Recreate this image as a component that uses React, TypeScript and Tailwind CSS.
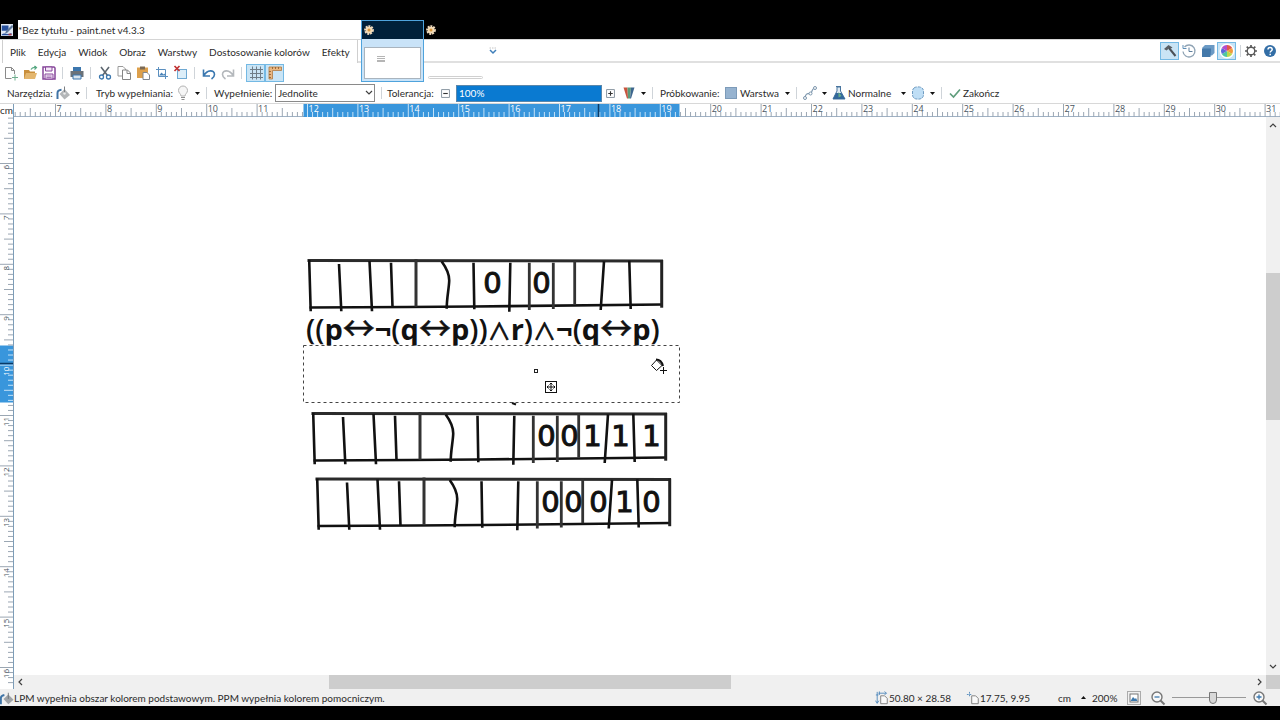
import type { ReactNode } from 'react';

const CM = 50.4;

function Icon({ children, size = 16 }: { children: ReactNode; size?: number }) {
  return (
    <svg width={size} height={size} viewBox="0 0 16 16" fill="none" className="shrink-0" aria-hidden="true">
      {children}
    </svg>
  );
}

const NewIcon = () => (
  <Icon>
    <path d="M8.500 13.500H2.500V2.500h6l3 3V9" stroke="#8a8a8a" />
    <path d="M8.500 2.500v3h3" stroke="#8a8a8a" />
    <path d="M12 9.500v6M9 12.500h6" stroke="#6fae8e" />
  </Icon>
);

const OpenIcon = () => (
  <Icon>
    <path d="M2 5h5l1 1.500h5V14H2z" fill="#c98f3c" />
    <path d="M4 8h11l-2 6H2z" fill="#e3b66e" />
    <path d="M9 4.500c1-2 3-2.500 5-2M12.500 1l2 1.500-2 2" stroke="#58a883" strokeWidth="1.200" />
  </Icon>
);

const SaveIcon = () => (
  <Icon>
    <path d="M2 2h11l1 1v11H2z" fill="#fff" stroke="#87479b" strokeWidth="1.500" />
    <path d="M4.500 2h6.500v4H4.500zM4 9h8v5H4z" fill="#f4e8f7" stroke="#87479b" />
    <path d="M5.500 11h5M5.500 12.500h5" stroke="#87479b" strokeWidth=".7" />
  </Icon>
);

const PrintIcon = () => (
  <Icon>
    <path d="M4 2h8v4H4z" fill="#3c77ae" />
    <path d="M1.500 6h13v6h-13z" fill="#6b7279" />
    <path d="M4 10h8v4H4z" fill="#d8e4ee" stroke="#3c77ae" />
  </Icon>
);

const CutIcon = () => (
  <Icon>
    <path d="M4 2l6.500 8.500M12 2L5.500 10.500" stroke="#5d6770" strokeWidth="1.600" />
    <circle cx="4.500" cy="12" r="2" stroke="#3c77ae" strokeWidth="1.300" />
    <circle cx="11.500" cy="12" r="2" stroke="#3c77ae" strokeWidth="1.300" />
  </Icon>
);

const CopyIcon = () => (
  <Icon>
    <path d="M2 1.500h5l2.500 2.500v7H2z" fill="#fff" stroke="#9a9a9a" />
    <path d="M6.500 5h5l3 3v6.500h-8z" fill="#fff" stroke="#858585" />
    <path d="M11 5v3.500h3.500" stroke="#858585" />
  </Icon>
);

const PasteIcon = () => (
  <Icon>
    <path d="M2 2.500h11V13H2z" fill="#dda04c" />
    <path d="M5 1.500h5v3H5z" fill="#7b6a55" />
    <path d="M8 7.500h4l2.500 2.500v4.500H8z" fill="#fff" stroke="#7f8790" />
  </Icon>
);

const CropIcon = () => (
  <Icon>
    <path d="M4.500 2v9.500H14M2 4.500h9.500V14" stroke="#5b8fbf" />
    <path d="M5 10.500l2.500-3 2 2 1-1 1 2z" fill="#4a83b8" />
  </Icon>
);

const DeselectIcon = () => (
  <Icon>
    <rect x="4.500" y="4.500" width="9" height="9" fill="#dceef9" stroke="#6fa9d3" />
    <path d="M1.500 1l5 5M6.500 1l-5 5" stroke="#c23434" strokeWidth="1.700" />
  </Icon>
);

const UndoIcon = () => (
  <Icon>
    <path d="M2.500 4.500V11H9M3 10.500c3-6 10.500-6 10.500-1 0 2.500-1.500 3.500-3 4.500" stroke="#3b78b0" strokeWidth="1.600" />
  </Icon>
);

const RedoIcon = () => (
  <Icon>
    <path d="M13.500 4.500V11H7M13 10.500c-3-6-10.500-6-10.500-1 0 2.500 1.500 3.500 3 4.500" stroke="#b4b8bc" strokeWidth="1.600" />
  </Icon>
);

const GridIcon = () => (
  <Icon>
    <path d="M4.500 1.500v13M8.500 1.500v13M12.500 1.500v13M2 4.500h13M2 8.500h13M2 12.500h13" stroke="#6f7d88" />
  </Icon>
);

const RulerIcon = () => (
  <Icon>
    <path d="M2 2h12.500v3.500H5.500V14H2z" fill="#e9b681" stroke="#b07a42" strokeWidth=".8" />
    <path d="M5.500 2v2M8.500 2v2M11.500 2v2M2 6.500h2M2 9.500h2M2 12.500h2" stroke="#8a5a2c" strokeWidth=".8" />
  </Icon>
);

const BucketIcon = () => (
  <Icon>
    <path d="M2.500 14V8c0-2 1.500-3 4-3.200" stroke="#3f74a6" strokeWidth="2" />
    <path d="M9.500 4l5.500 6-5.500 4.500L4.500 9z" fill="#b3b6b8" />
    <path d="M9.500 1.500V8" stroke="#7b7f83" />
    <circle cx="9.500" cy="8.500" r="1.200" fill="#ececec" />
  </Icon>
);

const BulbIcon = () => (
  <Icon>
    <path d="M6 11c0-2-2.500-3-2.500-5.500a4.500 4.500 0 0 1 9 0C12.500 8 10 9 10 11z" fill="#f6f6f6" stroke="#b3b3b3" />
    <path d="M6 12.500h4M6.500 14.500h3" stroke="#8f8f8f" />
  </Icon>
);

const FanIcon = () => (
  <Icon>
    <path d="M2.500 2.500H6.500L7 13.500H6z" fill="#c9543d" />
    <path d="M6.500 2.500h3.500l-1 11H7z" fill="#5a9b7b" />
    <path d="M10 2.500h3.500L10 13.500H9z" fill="#3d668e" />
  </Icon>
);

const CurveIcon = () => (
  <Icon>
    <path d="M3 13c1-7 4-3 6-5s0-4 4-5" stroke="#7c96ad" strokeWidth="1.200" />
    <circle cx="3" cy="13" r="1.500" fill="#fff" stroke="#7c96ad" />
    <circle cx="8.500" cy="8.500" r="1.500" fill="#fff" stroke="#7c96ad" />
    <circle cx="13" cy="3" r="1.500" fill="#fff" stroke="#7c96ad" />
  </Icon>
);

const FlaskIcon = () => (
  <Icon>
    <path d="M5 1.500h5M6 2v4L2 14h12L9.500 6V2z" fill="#dfeaf3" stroke="#48749e" />
    <path d="M5 8h5.500l3.500 6H2z" fill="#33689b" />
    <path d="M7.500 7l3 4-3 1.500z" fill="#67ad89" />
  </Icon>
);

const BlobIcon = () => (
  <Icon>
    <path d="M4 3c1.500-1.500 6.500-1.500 8 0 1.500 1 1.500 3 1.500 5s0 4-1.500 5c-1.500 1.500-6.500 1.500-8 0-1.500-1-1.500-3-1.500-5S2.500 4 4 3z" fill="#bfdef5" stroke="#6f9cc2" strokeDasharray="3 1" />
  </Icon>
);

const CheckIcon = () => (
  <Icon>
    <path d="M3 8.500L6.500 12 13 4.500" stroke="#5f9d7c" strokeWidth="1.700" />
  </Icon>
);

const HammerIcon = () => (
  <Icon>
    <path d="M2 6l4.500-4 4 2.500-1.500 1-1.500-.5-3 2.500z" fill="#5b6066" />
    <path d="M7 5l6.500 8" stroke="#4b5056" strokeWidth="2" />
  </Icon>
);

const HistoryIcon = () => (
  <Icon>
    <path d="M3.500 4A6 6 0 1 1 2 8.500" stroke="#8fa3b4" strokeWidth="1.300" />
    <path d="M2 2v3.500h3.500" stroke="#5f8fb8" />
    <path d="M8 4.500v4h3.500" stroke="#5f7f9c" />
  </Icon>
);

const LayersIcon = () => (
  <Icon>
    <path d="M5 2h9.500v8L12 12.500H2.500v-8z" fill="#6b9ac5" />
    <path d="M2 5.500h9l-.5 8.500H2z" fill="#4479aa" />
  </Icon>
);

const WheelIcon = () => (
  <Icon>
    <circle cx="8" cy="8" r="7.500" fill="#fff" />
    <path d="M8 8V2a6 6 0 0 1 5.200 3z" fill="#e2574a" />
    <path d="M8 8l5.200-3a6 6 0 0 1 0 6z" fill="#f09a3c" />
    <path d="M8 8l5.200 3A6 6 0 0 1 8 14z" fill="#b9d94c" />
    <path d="M8 8v6a6 6 0 0 1-5.200-3z" fill="#4fc6a3" />
    <path d="M8 8l-5.200 3a6 6 0 0 1 0-6z" fill="#5b68d8" />
    <path d="M8 8L2.800 5A6 6 0 0 1 8 2z" fill="#b14fcb" />
  </Icon>
);

const GearIcon = () => (
  <Icon>
    <circle cx="8" cy="8" r="3.800" stroke="#5a5a5a" strokeWidth="1.400" />
    <path d="M8 2v2M8 12v2M2 8h2M12 8h2M3.700 3.700l1.500 1.500M10.800 10.800l1.500 1.500M12.300 3.700l-1.500 1.500M5.200 10.800l-1.500 1.500" stroke="#5a5a5a" strokeWidth="1.700" />
  </Icon>
);

const HelpIcon = () => (
  <Icon>
    <circle cx="8" cy="8" r="6" fill="#336ea6" />
    <path d="M6 6.500c0-3 4.200-2.500 4.200 0 0 1.500-2 1.500-2 3M8.200 10.800v1.500" stroke="#fff" strokeWidth="1.500" />
  </Icon>
);

const SizeIcon = () => (
  <Icon size={14}>
    <path d="M2.500 1v13M1 4.500h3M.5 11l2 3 2-3M4 2.500h9M5 .5v4M11 .5l2 2-2 2" stroke="#4c86ba" />
    <path d="M6.500 5.500h4.500L14 8.500v6H6.500z" fill="#fafafa" stroke="#777" />
  </Icon>
);

const PositionIcon = () => (
  <Icon size={14}>
    <path d="M4 1v6M1 4h6" stroke="#4c86ba" strokeDasharray="2 1" />
    <path d="M6.500 5.500h4.500L14 8.500v6H6.500z" fill="#fafafa" stroke="#777" />
  </Icon>
);

const FitIcon = () => (
  <Icon>
    <rect x="1.500" y="1.500" width="13" height="13" stroke="#666" strokeDasharray="1 1" />
    <rect x="4" y="4" width="8" height="8" fill="#fff" stroke="#777" />
    <path d="M4.500 11l2.500-4 2 2 1-1 1.500 3z" fill="#3d79ae" />
  </Icon>
);

function ZoomIcon({ plus }: { plus?: boolean }) {
  return (
    <Icon>
      <circle cx="7" cy="7" r="5" fill="#f8f8f8" stroke="#777" strokeWidth="1.400" />
      <path d="M10.500 10.500L14.500 14.500" stroke="#777" strokeWidth="2" />
      <path d={plus ? 'M4.500 7h5M7 4.500v5' : 'M4.500 7h5'} stroke="#3d79ae" strokeWidth="1.300" />
    </Icon>
  );
}

const AppIcon = () => (
  <Icon size={12}>
    <rect width="16" height="16" fill="#dfe7f2" />
    <path d="M1 2h9v7H1z" fill="#27509c" />
    <path d="M15 1L7 9l-2 4 4-2 7-7z" fill="#5f7899" />
    <path d="M1 14c3-3 8 1 13-2v3H1z" fill="#27509c" />
    <path d="M10 13h4v2h-4z" fill="#b5373f" />
  </Icon>
);

const Gear = () => (
  <Icon size={12}>
    <circle cx="8" cy="8" r="5" stroke="#f1dcc0" strokeWidth="3" strokeDasharray="2.500 1.200" />
    <circle cx="8" cy="8" r="4.500" fill="#f3dcb8" />
    <circle cx="8" cy="8" r="2" fill="#d9963c" />
  </Icon>
);

function Caret({ up }: { up?: boolean }) {
  return (
    <svg width="5" height="3" viewBox="0 0 5 3" className="shrink-0" aria-hidden="true">
      <path d={up ? 'M0 3h5L2.500 0z' : 'M0 0h5L2.500 3z'} fill="#111" />
    </svg>
  );
}

function Chevron({ d }: { d: string }) {
  return (
    <svg width="8" height="8" viewBox="0 0 8 8" fill="none" className="shrink-0" aria-hidden="true">
      <path d={d} stroke="#404040" strokeWidth="1.200" />
    </svg>
  );
}

const Separator = () => (
  <span className="flex w-3 shrink-0 justify-center">
    <span className="h-3 w-px bg-[#cfd4d9]" />
  </span>
);

function ToolButton({ label, children, active }: { label: string; children: ReactNode; active?: boolean }) {
  return (
    <button
      type="button"
      aria-label={label}
      className={`flex h-[18px] w-[19px] shrink-0 items-center justify-center ${active ? 'border border-[#74b9e4] bg-[#c9e4f5]' : ''}`}
    >
      {children}
    </button>
  );
}

function DropButton({ label, children }: { label: string; children: ReactNode }) {
  return (
    <button type="button" aria-label={label} className="flex h-4 w-[25px] shrink-0 items-center justify-between">
      {children}
      <Caret />
    </button>
  );
}

const menus = ['Plik', 'Edycja', 'Widok', 'Obraz', 'Warstwy', 'Dostosowanie kolorów', 'Efekty'];

function TitleBar() {
  return (
    <header className="flex h-[19px] bg-black">
      <div className="flex w-[18px] items-center pl-px">
        <AppIcon />
      </div>
      <h1 className="flex w-[343px] items-center bg-white">*Bez tytułu - paint.net v4.3.3</h1>
      <div className="flex items-center pl-16">
        <Gear />
      </div>
    </header>
  );
}

function MenuBar() {
  return (
    <div className="flex h-6 border-t border-[#d5d5d5] pl-0.5">
      <nav className="flex w-[356px] shrink-0 items-center gap-3 border-x border-[#cfcfcf] pl-[7px]">
        {menus.map((menu) => (
          <button key={menu} type="button" className="whitespace-nowrap">
            {menu}
          </button>
        ))}
      </nav>
      <div className="flex grow items-center border-b-2 border-[#e0e0e0] pr-px">
        <button type="button" aria-label="Lista obrazów" className="ml-[131px]">
          <Icon size={8}>
            <path d="M1 2h14" stroke="#888" strokeDasharray="3 2" />
            <path d="M2 6l6 6 6-6" stroke="#3f7fba" strokeWidth="3" />
          </Icon>
        </button>
        <div className="ml-auto flex items-center">
          <ToolButton label="Narzędzia" active><HammerIcon /></ToolButton>
          <ToolButton label="Historia"><HistoryIcon /></ToolButton>
          <ToolButton label="Warstwy"><LayersIcon /></ToolButton>
          <ToolButton label="Kolory" active><WheelIcon /></ToolButton>
          <span className="ml-1 h-3 w-px bg-[#cfd4d9]" />
          <ToolButton label="Ustawienia"><GearIcon /></ToolButton>
          <ToolButton label="Pomoc"><HelpIcon /></ToolButton>
        </div>
      </div>
    </div>
  );
}

function Toolbar() {
  return (
    <div className="flex h-5 items-center pl-px">
      <ToolButton label="Nowy"><NewIcon /></ToolButton>
      <ToolButton label="Otwórz"><OpenIcon /></ToolButton>
      <ToolButton label="Zapisz"><SaveIcon /></ToolButton>
      <span className="mx-1 h-3 w-px bg-[#cfd4d9]" />
      <ToolButton label="Drukuj"><PrintIcon /></ToolButton>
      <span className="mx-1 h-3 w-px bg-[#cfd4d9]" />
      <ToolButton label="Wytnij"><CutIcon /></ToolButton>
      <ToolButton label="Kopiuj"><CopyIcon /></ToolButton>
      <ToolButton label="Wklej"><PasteIcon /></ToolButton>
      <ToolButton label="Przytnij"><CropIcon /></ToolButton>
      <ToolButton label="Odznacz"><DeselectIcon /></ToolButton>
      <span className="mx-1 h-3 w-px bg-[#cfd4d9]" />
      <ToolButton label="Cofnij"><UndoIcon /></ToolButton>
      <ToolButton label="Ponów"><RedoIcon /></ToolButton>
      <span className="mx-1 h-3 w-px bg-[#cfd4d9]" />
      <ToolButton label="Siatka" active><GridIcon /></ToolButton>
      <ToolButton label="Linijki" active><RulerIcon /></ToolButton>
      <span className="ml-36 mt-2 h-[3px] w-[55px] rounded-full border border-[#d0d0d0]" />
    </div>
  );
}

function OptionsBar() {
  return (
    <div className="flex h-5 items-center whitespace-nowrap pl-[7px]">
      <span className="w-12 shrink-0">Narzędzia:</span>
      <DropButton label="Narzędzie"><BucketIcon /></DropButton>
      <Separator />
      <span className="w-[83px] shrink-0 pl-1">Tryb wypełniania:</span>
      <DropButton label="Tryb wypełniania"><BulbIcon /></DropButton>
      <Separator />
      <label htmlFor="fill" className="w-[63px] shrink-0 pl-0.5">Wypełnienie:</label>
      <div className="relative w-[100px] shrink-0">
        <select id="fill" className="block h-[18px] w-full appearance-none border border-[#8a8a8a] bg-white pl-0.5">
          <option>Jednolite</option>
        </select>
        <span className="pointer-events-none absolute right-0.5 top-[5px]">
          <Chevron d="M1 2l3 3 3-3" />
        </span>
      </div>
      <Separator />
      <label htmlFor="tolerance" className="w-[54px] shrink-0">Tolerancja:</label>
      <button type="button" aria-label="Zmniejsz" className="mr-1.5 shrink-0">
        <Icon size={9}>
          <path d="M1 1h14v14H1z" stroke="#7f8c99" strokeWidth="1.600" />
          <path d="M4 8h8" stroke="#333" strokeWidth="2" />
        </Icon>
      </button>
      <input id="tolerance" defaultValue="100%" className="h-[17px] w-[146px] shrink-0 border border-[#5a87ab] bg-[#0a7ad1] pl-0.5 text-white" />
      <button type="button" aria-label="Zwiększ" className="ml-1 mr-1.5 shrink-0">
        <Icon size={9}>
          <path d="M1 1h14v14H1z" stroke="#7f8c99" strokeWidth="1.600" />
          <path d="M4 8h8M8 4v8" stroke="#333" strokeWidth="2" />
        </Icon>
      </button>
      <DropButton label="Tryb tolerancji"><FanIcon /></DropButton>
      <Separator />
      <span className="w-[67px] shrink-0 pl-0.5">Próbkowanie:</span>
      <button type="button" className="flex w-[65px] shrink-0 items-center gap-[3px]">
        <span className="size-3 border border-[#7d9bb9] bg-[#96b3d0]" />
        Warstwa
        <span className="ml-auto"><Caret /></span>
      </button>
      <Separator />
      <DropButton label="Wygładzanie"><CurveIcon /></DropButton>
      <button type="button" className="mx-1 flex w-[75px] shrink-0 items-center gap-px">
        <FlaskIcon />
        Normalne
        <span className="ml-auto"><Caret /></span>
      </button>
      <DropButton label="Zaznaczenie"><BlobIcon /></DropButton>
      <Separator />
      <button type="button" className="flex items-center">
        <CheckIcon />
        Zakończ
      </button>
    </div>
  );
}

function tickSize(i: number) {
  if (i % 10 === 0) return 14;
  return i % 5 === 0 ? 9 : 5;
}

const ticks = Array.from({ length: 270 }, (_, i) => i);

function HorizontalRuler() {
  return (
    <div className="flex h-3.5 border-t border-[#d8d8d8]">
      <span className="w-3.5 shrink-0 border-r border-[#7d9db8] leading-[13px]">cm</span>
      <svg className="h-[13px] min-w-0 grow overflow-visible border-b border-[#9fb2c6]" aria-hidden="true">
        <rect x="289.500" width="376" height="13" fill="#3996dc" />
        {ticks.slice(2).map((i) => {
          const x = 41.500 - CM + (i * CM) / 10;
          const selected = x > 289 && x < 666;
          return x > 0 && (
            <path key={i} d={`M${x} 13V${Math.max(0, 13 - tickSize(i))}`} stroke={selected ? '#c5e2f7' : '#9ba7b3'} />
          );
        })}
        <path d="M584.500 0v13" stroke="#0a3a66" strokeWidth="1.500" />
        {Array.from({ length: 25 }, (_, i) => (
          <text
            key={i}
            x={42.500 + i * CM}
            y="8"
            className={`font-['Open_Sans'] text-[9px] ${i > 4 && i < 13 ? 'fill-white' : 'fill-[#4a5560]'}`}
          >
            {i + 7}
          </text>
        ))}
      </svg>
    </div>
  );
}

function VerticalRuler() {
  return (
    <svg className="h-full w-3.5 shrink-0 overflow-visible border-r border-[#7d9db8]" aria-hidden="true">
      <rect y="228.500" width="13" height="57" fill="#3996dc" />
      {ticks.slice(1, 114).map((i) => {
        const y = 46.500 - CM + (i * CM) / 10;
        const selected = y > 228 && y < 286;
        return y > 0 && (
          <path key={i} d={`M13 ${y}H${Math.max(0, 13 - tickSize(i))}`} stroke={selected ? '#c5e2f7' : '#9ba7b3'} />
        );
      })}
      <path d="M0 246.500h13" stroke="#0a3a66" strokeWidth="1.500" />
      {Array.from({ length: 11 }, (_, i) => (
        <text
          key={i}
          transform={`translate(9 ${48 + i * CM}) rotate(-90)`}
          textAnchor="end"
          className={`font-['Open_Sans'] text-[8px] ${i === 4 ? 'fill-white' : 'fill-[#4a5560]'}`}
        >
          {i + 6}
        </text>
      ))}
    </svg>
  );
}

// One hand-drawn strip of cells; the digits are pasted into it afterwards.
function Strip({ x, y, digits }: { x: number; y: number; digits: [number, string][] }) {
  return (
    <g transform={`translate(${x} ${y})`}>
      <g stroke="#111" strokeWidth="2.600" fill="none">
        <path d="M0 1.500L355.500 2" stroke="#2b2b2b" strokeWidth="3" />
        <path d="M2 48.500L100 48 166 47.500 355 45.500" />
        <path d="M1.700 1l1.500 51.300M31.500 5l2.300 47.300M62 2l2.500 50.300M83.500 3.700l1.500 44" />
        <path d="M108.500 0v47.700" stroke="#333" strokeWidth="3" />
        <path d="M134.200 2.500c4 5.500 7.800 11.500 7.500 19.500s-2.500 17-2.500 27.700M166 3.700l.8 46.600M202.800 3.700l-1 49" />
        <path d="M221.800 3.700v47.300M245.800 3.700v46.300M267.200 1.700v44" stroke="#333" strokeWidth="2.800" />
        <path d="M296.500 2.300L293.200 51M321.800 1.700l1.400 48.300" />
        <path d="M354.200 1v47.700" stroke="#222" strokeWidth="3" />
      </g>
      {digits.map(([dx, digit]) => (
        <text key={dx} x={dx} y="34" textAnchor="middle" stroke="#111" className="fill-[#111] font-['DejaVu_Sans'] text-[29px]">
          {digit}
        </text>
      ))}
    </g>
  );
}

const Arrow = () => (
  <tspan stroke="#111" strokeWidth=".6" className="font-['Noto_Sans_CJK_SC'] text-[32px] font-normal">↔</tspan>
);
const And = () => (
  <tspan stroke="#111" strokeWidth=".8" className="font-['Noto_Sans_CJK_SC'] text-[23px] font-normal">∧</tspan>
);

function Formula() {
  return (
    <text x="292" y="223" className="fill-[#111] font-['Open_Sans'] text-[29px] font-bold">
      <tspan className="font-semibold">((</tspan>p<Arrow />¬<tspan className="font-semibold">(</tspan>q<Arrow />p
      <tspan className="font-semibold">))</tspan>
      <And />r<tspan className="font-semibold">)</tspan>
      <And />¬<tspan className="font-semibold">(</tspan>q<Arrow />p<tspan className="font-semibold">)</tspan>
    </text>
  );
}

function Canvas() {
  return (
    <main className="relative min-w-0 grow overflow-hidden bg-white">
      <svg className="absolute inset-0 h-full w-full" role="img" aria-label="Tabela prawdy">
        <Strip x={293.500} y={142} digits={[[185, '0'], [234, '0']]} />
        <Strip x={297.500} y={295} digits={[[235, '0'], [258, '0'], [281, '1'], [309, '1'], [340, '1']]} />
        <Strip x={301.500} y={360.500} digits={[[235, '0'], [258, '0'], [283, '0'], [309, '1'], [336, '0']]} />
        <Formula />
        <rect x="289.500" y="228.500" width="376" height="57" fill="#fff" stroke="#444" strokeDasharray="3 3" />
        <rect x="520.500" y="252.500" width="3" height="3" fill="#fff" stroke="#222" />
        <path d="M498 286l4 1.500" stroke="#111" strokeWidth="2" />
        <g stroke="#111">
          <rect x="531.500" y="264.500" width="11" height="11" fill="#fff" />
          <path d="M537 266v8M533 270h8" />
          <path d="M535.500 267.500l1.500-1.500 1.500 1.500M535.500 272.500l1.500 1.500 1.500-1.500M534.500 268.500l-1.500 1.500 1.500 1.500M539.500 268.500l1.500 1.500-1.500 1.500" fill="none" />
        </g>
        <g stroke="#111" fill="none">
          <path d="M642.500 243l-5 5.500 5 5 5.500-5z" fill="#fff" />
          <path d="M642 242.500c4 0 6 2.500 7 6.500" strokeWidth="2" />
          <path d="M649.500 250v7M646 253.500h7" />
        </g>
      </svg>
    </main>
  );
}

function Workspace() {
  return (
    <div className="flex h-[572px]">
      <VerticalRuler />
      <div className="flex min-w-0 grow flex-col">
        <div className="flex min-h-0 grow">
          <Canvas />
          <div className="flex w-3.5 shrink-0 flex-col items-center bg-[#f0f0f0] py-1">
            <Chevron d="M1 6l3-3 3 3" />
            <span className="mb-auto mt-36 h-[147px] w-full bg-[#cdcdcd]" />
            <Chevron d="M1 2l3 3 3-3" />
          </div>
        </div>
        <div className="flex h-3.5 shrink-0 items-center bg-[#f0f0f0]">
          <span className="flex grow items-center px-0.5">
            <Chevron d="M6 1L3 4l3 3" />
            <span className="ml-[305px] mr-auto h-3.5 w-[402px] bg-[#cdcdcd]" />
            <Chevron d="M2 1l3 3-3 3" />
          </span>
          <span className="h-full w-3.5 bg-[#cdcdcd]" />
        </div>
      </div>
    </div>
  );
}

function StatusBar() {
  return (
    <footer className="flex h-[17px] items-center whitespace-nowrap bg-[#f0f0f0] pr-3">
      <Icon size={14}>
        <path d="M1 15V8c0-2 1.500-3 4-3.500" stroke="#3f74a6" strokeWidth="2.200" />
        <path d="M9.500 4l6 6-6 5-5.500-6z" fill="#a0a4a8" />
        <path d="M9.500 2v7" stroke="#6b6f73" />
      </Icon>
      <p>LPM wypełnia obszar kolorem podstawowym. PPM wypełnia kolorem pomocniczym.</p>
      <div className="ml-auto flex items-center">
        <span className="flex w-[91px] items-center"><SizeIcon />50.80 × 28.58</span>
        <span className="flex w-[92px] items-center"><PositionIcon />17.75, 9.95</span>
        <button type="button" className="flex w-[34px] items-center gap-2.5">
          cm
          <Caret up />
        </button>
        <span className="w-[34px]">200%</span>
        <button type="button" aria-label="Dopasuj"><FitIcon /></button>
        <button type="button" aria-label="Pomniejsz" className="ml-2"><ZoomIcon /></button>
        <input
          type="range"
          aria-label="Powiększenie"
          defaultValue={56}
          className="mx-1.5 h-3.5 w-[74px] appearance-none bg-[linear-gradient(#999,#999)] bg-[length:100%_1px] bg-center bg-no-repeat [&::-webkit-slider-thumb]:h-3 [&::-webkit-slider-thumb]:w-2 [&::-webkit-slider-thumb]:appearance-none [&::-webkit-slider-thumb]:rounded-b-full [&::-webkit-slider-thumb]:border [&::-webkit-slider-thumb]:border-[#777] [&::-webkit-slider-thumb]:bg-[#d8d8d8]"
        />
        <button type="button" aria-label="Powiększ"><ZoomIcon plus /></button>
      </div>
    </footer>
  );
}

// Preview of the open image, hanging from the title bar over the menu.
function Thumbnail() {
  return (
    <div className="absolute left-[361px] top-5 flex h-[62px] w-[63px] flex-col border border-[#4fa3dc] bg-[#c9e3f8]">
      <div className="flex h-[18px] items-center bg-[#00203a] pl-px">
        <Gear />
      </div>
      <div className="mx-0.5 mt-2 h-8 border border-[#a9b4be] bg-white pl-3 pt-2">
        <div className="h-[3px] w-2 border-y border-[#b5b5b5]" />
        <div className="mt-px h-0.5 w-2 bg-[#b5b5b5]" />
      </div>
    </div>
  );
}

export default function App() {
  return (
    <div className="relative min-h-screen overflow-x-hidden bg-black pb-3.5 pt-5 font-[Lato,'Open_Sans',sans-serif] text-[10px] leading-[14px] text-[#2b2b2b]">
      <TitleBar />
      <div className="bg-white">
        <MenuBar />
        <Toolbar />
        <OptionsBar />
        <HorizontalRuler />
        <Workspace />
        <StatusBar />
      </div>
      <Thumbnail />
    </div>
  );
}
